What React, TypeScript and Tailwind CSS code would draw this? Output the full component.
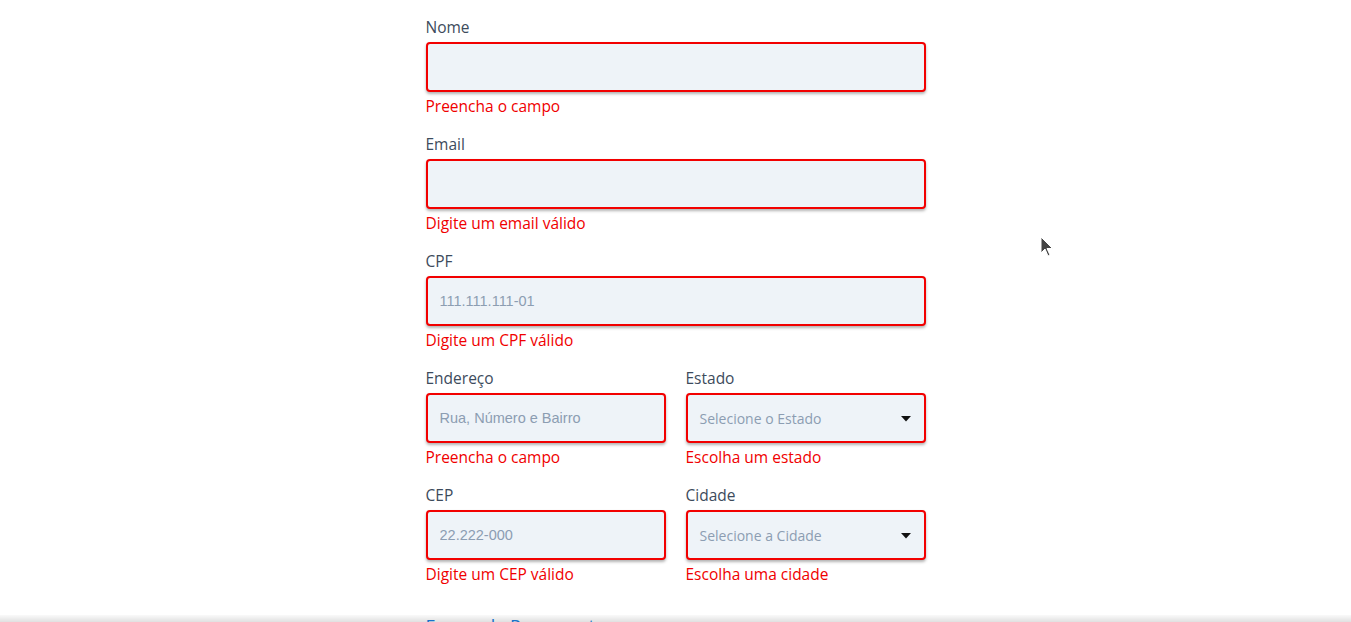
import React from "react";

const font = { fontFamily: "'Open Sans', Lato, sans-serif" };

const Label = ({ children }: { children: React.ReactNode }) => (
  <label className="block text-[15.5px] leading-[20px] text-[#3d4b5c] mb-[5px]">
    {children}
  </label>
);

const Error = ({ children }: { children: React.ReactNode }) => (
  <p className="text-[15.5px] leading-[20px] text-[#f00000] mt-[4px]">{children}</p>
);

const boxClass =
  "w-full h-[50px] rounded-[4px] border-2 border-[#f20000] bg-[#eef3f8] shadow-[0_2px_3px_rgba(0,0,0,0.3)] px-[12px] outline-none";

const TextField = ({
  label,
  placeholder,
  error,
}: {
  label: string;
  placeholder?: string;
  error: string;
}) => (
  <div className="mb-[18px]">
    <Label>{label}</Label>
    <input
      className={`${boxClass} text-[14.5px] text-[#3d4b5c] placeholder:text-[#8c9db2] font-['Liberation_Sans',Arial,sans-serif]`}
      placeholder={placeholder}
    />
    <Error>{error}</Error>
  </div>
);

const SelectField = ({
  label,
  placeholder,
  error,
}: {
  label: string;
  placeholder: string;
  error: string;
}) => (
  <div className="mb-[18px]">
    <Label>{label}</Label>
    <div className={`${boxClass} flex items-center justify-between`}>
      <span className="text-[14px] text-[#8c9db2]">{placeholder}</span>
      <svg width="10" height="6" viewBox="0 0 10 6" className="mr-[1px] mt-[1px]">
        <path d="M0 0 H10 L5 5.5 Z" fill="#111" />
      </svg>
    </div>
    <Error>{error}</Error>
  </div>
);

export default function App() {
  return (
    <div className="relative h-[622px] overflow-hidden bg-white" style={font}>
      <div className="w-[500px] mx-auto pt-[17px]">
        <TextField label="Nome" error="Preencha o campo" />
        <TextField label="Email" error="Digite um email válido" />
        <TextField label="CPF" placeholder="111.111.111-01" error="Digite um CPF válido" />
        <div className="grid grid-cols-2 gap-x-[20px]">
          <TextField label="Endereço" placeholder="Rua, Número e Bairro" error="Preencha o campo" />
          <SelectField label="Estado" placeholder="Selecione o Estado" error="Escolha um estado" />
          <TextField label="CEP" placeholder="22.222-000" error="Digite um CEP válido" />
          <SelectField label="Cidade" placeholder="Selecione a Cidade" error="Escolha uma cidade" />
        </div>
        <h3 className="mt-[12px] text-[18px] leading-[24px] text-[#1a7fe0]">Forma de Pagamento</h3>
      </div>

      {/* mouse pointer */}
      <svg
        className="absolute left-[1040px] top-[236px]"
        width="14"
        height="22"
        viewBox="0 0 14 22"
      >
        <path d="M1 1 L1 17 L5 13 L8 20 L10 19 L7 12.5 L12.5 12.5 Z" fill="#444" stroke="#fff" strokeWidth="1" />
      </svg>

      {/* bottom shadow */}
      <div className="absolute inset-x-0 bottom-0 h-[7px] bg-gradient-to-b from-[rgba(0,0,0,0.02)] to-[rgba(0,0,0,0.12)]" />
    </div>
  );
}
